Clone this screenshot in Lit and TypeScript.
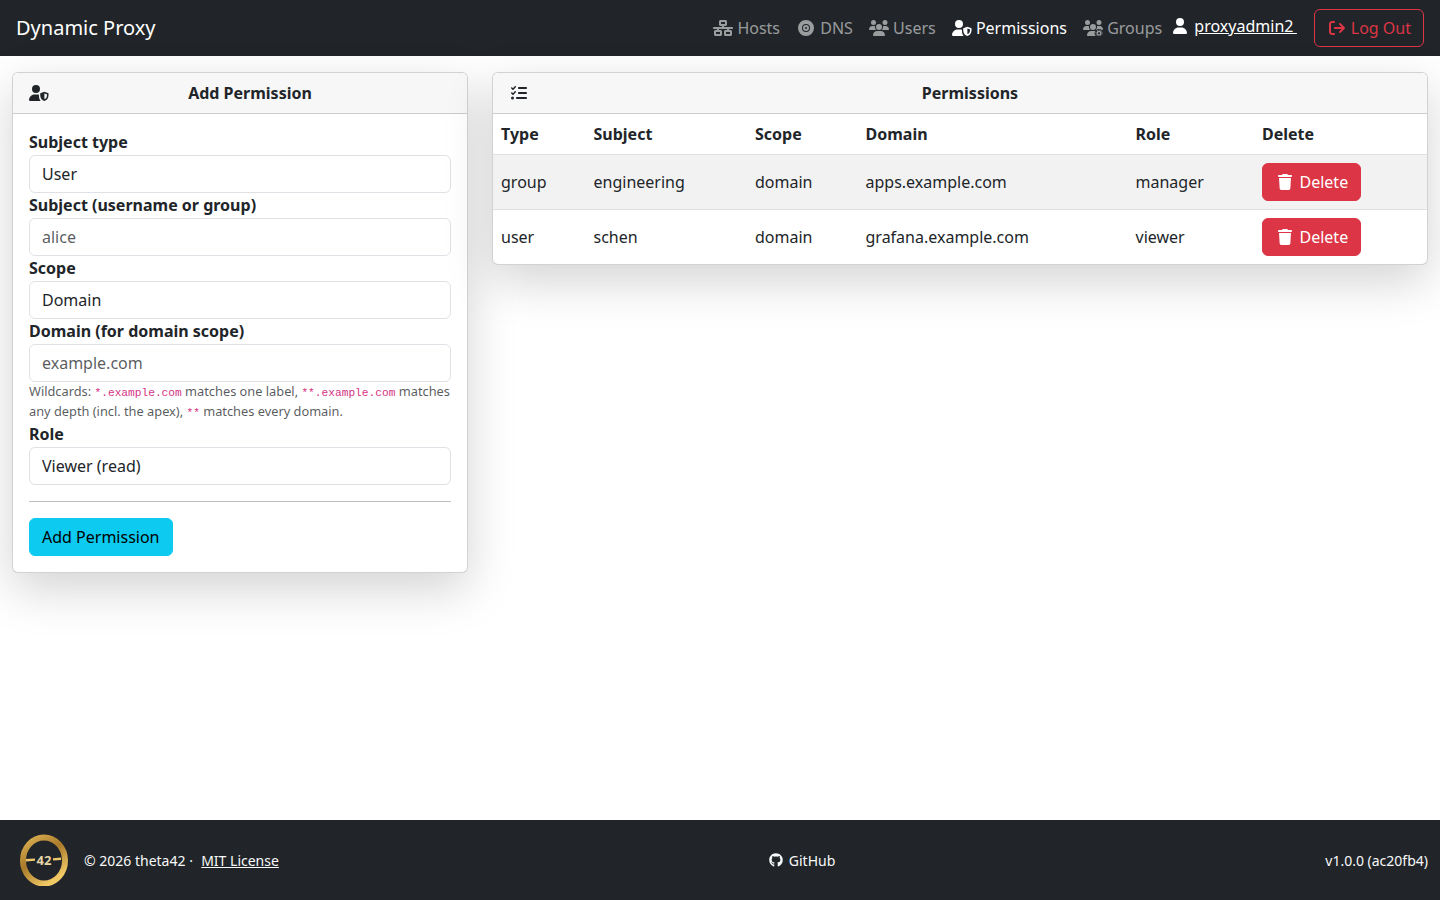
import { LitElement, html, css, svg } from 'lit';
import { customElement } from 'lit/decorators.js';

const icon = (box: string, d: string) => html`<svg class="ico" viewBox=${box} fill="currentColor"><path d=${d}></path></svg>`;

const USER = 'M224 256A128 128 0 1 0 224 0a128 128 0 1 0 0 256zm-45.7 48C79.8 304 0 383.8 0 482.3C0 498.7 13.3 512 29.7 512l388.6 0c16.4 0 29.7-13.3 29.7-29.7C448 383.8 368.2 304 269.7 304l-91.4 0z';
const USERS = 'M144 0a80 80 0 1 1 0 160A80 80 0 1 1 144 0zM512 0a80 80 0 1 1 0 160A80 80 0 1 1 512 0zM0 298.7C0 239.8 47.8 192 106.7 192l42.7 0c15.9 0 31 3.5 44.6 9.7c-1.3 7.2-1.9 14.7-1.9 22.3c0 38.2 16.8 72.5 43.3 96c-.2 0-.4 0-.7 0L21.3 320C9.6 320 0 310.4 0 298.7zM405.3 320c-.2 0-.4 0-.7 0c26.6-23.5 43.3-57.8 43.3-96c0-7.6-.7-15-1.9-22.3c13.6-6.3 28.7-9.7 44.6-9.7l42.7 0C592.2 192 640 239.8 640 298.7c0 11.8-9.6 21.3-21.3 21.3l-213.3 0zM224 224a96 96 0 1 1 192 0 96 96 0 1 1 -192 0zM128 485.3C128 411.7 187.7 352 261.3 352l117.3 0C452.3 352 512 411.7 512 485.3c0 14.7-11.9 26.7-26.7 26.7l-330.7 0c-14.7 0-26.7-11.9-26.7-26.7z';
const WIRED = 'M256 64H384v64H256V64zM240 0c-26.5 0-48 21.5-48 48v96c0 26.5 21.5 48 48 48h48v32H32c-17.7 0-32 14.3-32 32s14.3 32 32 32h96v32H80c-26.5 0-48 21.5-48 48v96c0 26.5 21.5 48 48 48H240c26.5 0 48-21.5 48-48V368c0-26.5-21.5-48-48-48H192V288H448v32H400c-26.5 0-48 21.5-48 48v96c0 26.5 21.5 48 48 48H560c26.5 0 48-21.5 48-48V368c0-26.5-21.5-48-48-48H512V288h96c17.7 0 32-14.3 32-32s-14.3-32-32-32H352V192h48c26.5 0 48-21.5 48-48V48c0-26.5-21.5-48-48-48H240zM96 448V384H224v64H96zm320-64H544v64H416V384z';
const DISC = 'M0 256a256 256 0 1 1 512 0A256 256 0 1 1 0 256zm256-96a96 96 0 1 1 0 192 96 96 0 1 1 0-192zm0 224a128 128 0 1 0 0-256 128 128 0 1 0 0 256zm0-96a32 32 0 1 0 0-64 32 32 0 1 0 0 64z';
const LOGOUT = 'M502.6 278.6c12.5-12.5 12.5-32.8 0-45.3l-128-128c-12.5-12.5-32.8-12.5-45.3 0s-12.5 32.8 0 45.3L402.7 224 192 224c-17.7 0-32 14.3-32 32s14.3 32 32 32l210.7 0-73.4 73.4c-12.5 12.5-12.5 32.8 0 45.3s32.8 12.5 45.3 0l128-128zM160 96c17.7 0 32-14.3 32-32s-14.3-32-32-32L96 32C43 32 0 75 0 128L0 384c0 53 43 96 96 96l64 0c17.7 0 32-14.3 32-32s-14.3-32-32-32l-64 0c-17.7 0-32-14.3-32-32l0-256c0-17.7 14.3-32 32-32l64 0z';
const TRASH = 'M135.2 17.7L128 32 32 32C14.3 32 0 46.3 0 64S14.3 96 32 96l384 0c17.7 0 32-14.3 32-32s-14.3-32-32-32l-96 0-7.2-14.3C307.4 6.8 296.3 0 284.2 0L163.8 0c-12.1 0-23.2 6.8-28.6 17.7zM416 128L32 128 53.2 467c1.6 25.3 22.6 45 47.9 45l245.8 0c25.3 0 46.3-19.7 47.9-45L416 128z';
const TASKS = 'M152.1 38.2c9.9 8.9 10.7 24 1.8 33.9l-72 80c-4.4 4.9-10.6 7.8-17.2 7.9s-12.9-2.4-17.6-7L7 113C-2.3 103.6-2.3 88.4 7 79s24.6-9.4 33.9 0l22.1 22.1 55.1-61.2c8.9-9.9 24-10.7 33.9-1.8zm0 160c9.9 8.9 10.7 24 1.8 33.9l-72 80c-4.4 4.9-10.6 7.8-17.2 7.9s-12.9-2.4-17.6-7L7 273c-9.4-9.4-9.4-24.6 0-33.9s24.6-9.4 33.9 0l22.1 22.1 55.1-61.2c8.9-9.9 24-10.7 33.9-1.8zM224 96c0-17.7 14.3-32 32-32H480c17.7 0 32 14.3 32 32s-14.3 32-32 32H256c-17.7 0-32-14.3-32-32zm0 160c0-17.7 14.3-32 32-32H480c17.7 0 32 14.3 32 32s-14.3 32-32 32H256c-17.7 0-32-14.3-32-32zM160 416c0-17.7 14.3-32 32-32H480c17.7 0 32 14.3 32 32s-14.3 32-32 32H192c-17.7 0-32-14.3-32-32zM48 368a48 48 0 1 1 0 96 48 48 0 1 1 0-96z';
const GITHUB = 'M244.8 8C106.1 8 0 113.3 0 252c0 110.9 69.8 205.8 169.5 239.2 12.8 2.3 17.3-5.6 17.3-12.1 0-6.2-.3-40.4-.3-61.4 0 0-70 15-84.7-29.8 0 0-11.4-29.1-27.8-36.6 0 0-22.9-15.7 1.6-15.4 0 0 24.9 2 38.6 25.8 21.9 38.6 58.6 27.5 72.9 20.9 2.3-16 8.8-27.1 16-33.7-55.9-6.2-112.3-14.3-112.3-110.5 0-27.5 7.6-41.3 23.6-58.9-2.6-6.5-11.1-33.3 2.6-67.9 20.9-6.5 69 27 69 27 20-5.6 41.5-8.5 62.8-8.5s42.8 2.9 62.8 8.5c0 0 48.1-33.6 69-27 13.7 34.7 5.2 61.4 2.6 67.9 16 17.7 25.8 31.5 25.8 58.9 0 96.5-58.9 104.2-114.8 110.5 9.2 7.9 17 22.9 17 46.4 0 33.7-.3 75.4-.3 83.6 0 6.5 4.6 14.4 17.3 12.1C428.2 457.8 496 362.9 496 252 496 113.3 383.5 8 244.8 8z';

// person with a half filled shield at the lower right
const userShield = () => html`<svg class="ico" viewBox="0 0 640 512" fill="currentColor">
  <path d="M224 256A128 128 0 1 0 224 0a128 128 0 1 0 0 256zM178.3 304C79.8 304 0 383.8 0 482.3 0 498.7 13.3 512 29.7 512H375C340 470 318 415 318 345V312C302 306 285 304 269.7 304z"></path>
  <path fill-rule="evenodd" d="M492 216L624 262V340C624 425 560 490 492 512 424 490 360 425 360 340V262zM492 272V450C535 434 574 395 574 340V296z"></path>
</svg>`;

// group of people with a gear at the lower right
const usersGear = () => html`<svg class="ico" viewBox="0 0 640 512" fill="currentColor">
  <mask id="gear-cut"><rect width="640" height="512" fill="#fff"></rect><circle cx="512" cy="425" r="140" fill="#000"></circle></mask>
  <path mask="url(#gear-cut)" d=${USERS}></path>
  <circle cx="512" cy="425" r="58" fill="none" stroke="currentColor" stroke-width="42"></circle>
  <circle cx="512" cy="425" r="100" fill="none" stroke="currentColor" stroke-width="28" stroke-dasharray="39 39.5"></circle>
</svg>`;

const logo = svg`<svg class="logo" viewBox="0 0 48 52">
  <defs>
    <linearGradient id="gold" x1="0" y1="0" x2="0.6" y2="1">
      <stop offset="0" stop-color="#e0b455"></stop>
      <stop offset="0.5" stop-color="#a87a2a"></stop>
      <stop offset="1" stop-color="#f0c965"></stop>
    </linearGradient>
  </defs>
  <ellipse cx="24" cy="26.5" rx="21" ry="23" fill="none" stroke="url(#gold)" stroke-width="6"></ellipse>
  <path d="M6 26.2L15 25.6M33 25.4L41 24.8" stroke="#efc86e" stroke-width="2.4" fill="none"></path>
  <text x="24" y="30.5" text-anchor="middle" font-family="Noto Sans, sans-serif" font-size="13" font-weight="700" fill="#e6d5a8">42</text>
</svg>`;

const NAV = [
  { label: 'Hosts', glyph: icon('0 0 640 512', WIRED) },
  { label: 'DNS', glyph: icon('0 0 512 512', DISC) },
  { label: 'Users', glyph: icon('0 0 640 512', USERS) },
  { label: 'Permissions', glyph: userShield(), active: true },
  { label: 'Groups', glyph: usersGear() },
];

const ROWS = [
  ['group', 'engineering', 'domain', 'apps.example.com', 'manager'],
  ['user', 'schen', 'domain', 'grafana.example.com', 'viewer'],
];

@customElement('app-root')
export class AppRoot extends LitElement {
  static styles = css`
    :host {
      display: flex;
      flex-direction: column;
      min-height: 100vh;
      font-family: 'Noto Sans', sans-serif;
      font-size: 16px;
      line-height: 1.5;
      color: #212529;
      background: #fff;
    }
    * { box-sizing: border-box; }
    .ico { width: 20px; height: 16px; flex: none; display: block; }

    nav {
      height: 56px;
      flex: none;
      background: #212529;
      display: flex;
      align-items: center;
      padding: 0 16px;
    }
    .brand { font-size: 20px; color: #fff; margin-right: auto; }
    .nav-item {
      display: flex;
      align-items: center;
      gap: 4.2px;
      padding: 0 8px;
      color: rgba(255, 255, 255, .55);
    }
    .nav-item.active { color: #fff; }
    .me {
      display: flex;
      align-items: center;
      gap: 4.2px;
      margin-right: 16.7px;
      color: #fff;
      position: relative;
      top: -2px;
    }
    .me a { color: #fff; text-decoration: underline; white-space: pre; word-spacing: -0.7px; }
    .logout {
      display: flex;
      align-items: center;
      gap: 4.2px;
      height: 38px;
      padding: 0 12px;
      border: 1px solid #dc3545;
      border-radius: 6px;
      color: #dc3545;
    }

    main {
      flex: 1;
      display: flex;
      align-items: flex-start;
      gap: 24px;
      padding: 16px 12px;
    }
    .card {
      background: #fff;
      border: 1px solid rgba(0, 0, 0, .175);
      border-radius: 6px;
      box-shadow: 0 16px 48px rgba(0, 0, 0, .175);
      overflow: hidden;
    }
    .side { width: 456px; flex: none; }
    .list { flex: 1; }
    .card-head {
      height: 41px;
      display: flex;
      align-items: center;
      padding: 0 16px;
      background: #f7f7f7;
      border-bottom: 1px solid rgba(0, 0, 0, .175);
    }
    .card-head h2 {
      flex: 1;
      margin: 0;
      text-align: center;
      font-size: 16px;
      font-weight: 700;
    }

    .card-body { padding: 16px; }
    label { display: block; height: 25px; font-weight: 700; }
    .control {
      display: block;
      width: 100%;
      height: 38px;
      padding: 0 12px;
      border: 1px solid #dee2e6;
      border-radius: 6px;
      background: #fff;
      font: inherit;
      color: #212529;
      appearance: none;
    }
    .control::placeholder { color: rgba(33, 37, 41, .75); opacity: 1; }
    .help {
      margin: -1px 0 1px;
      font-size: 12.8px;
      line-height: 20px;
      color: rgba(33, 37, 41, .75);
    }
    code {
      font-family: 'Liberation Mono', monospace;
      font-size: 11.2px;
      line-height: 1;
      color: #d63384;
    }
    hr {
      margin: 16px 0;
      border: 0;
      border-top: 1px solid rgba(0, 0, 0, .25);
    }
    .add {
      height: 38px;
      padding: 0 12px;
      border: 1px solid #0dcaf0;
      border-radius: 6px;
      background: #0dcaf0;
      font: inherit;
      color: #000;
    }

    table { width: 100%; border-collapse: collapse; table-layout: fixed; }
    th, td {
      padding: 8px;
      text-align: left;
      border-bottom: 1px solid #dee2e6;
    }
    th { font-weight: 700; height: 40px; }
    td { height: 55px; }
    tbody tr:last-child td { border-bottom: 0; height: 54px; }
    tbody tr:nth-child(odd) td { background: #f2f2f2; }
    .c-type { width: 92.5px; }
    .c-subject { width: 161.5px; }
    .c-scope { width: 110.5px; }
    .c-domain { width: 270px; }
    .c-role { width: 126.5px; }
    .del {
      display: inline-flex;
      align-items: center;
      gap: 4.5px;
      height: 38px;
      padding: 0 12px;
      border: 1px solid #dc3545;
      border-radius: 6px;
      background: #dc3545;
      font: inherit;
      color: #fff;
      vertical-align: middle;
    }

    footer {
      height: 80px;
      flex: none;
      background: #212529;
      color: #f8f9fa;
      font-size: 14px;
      display: flex;
      align-items: center;
      justify-content: space-between;
      padding: 0 12px;
    }
    .foot-left { display: flex; align-items: center; white-space: pre; }
    .foot-left a { margin-left: 1px; }
    .logo { width: 48px; height: 52px; margin: 0 16px 0 8px; display: block; }
    footer a { color: #f8f9fa; }
    .gh { display: flex; align-items: center; gap: 6px; text-decoration: none; }
    .gh .ico { width: 14px; height: 14px; }
  `;

  render() {
    return html`
      <nav>
        <div class="brand">Dynamic Proxy</div>
        ${NAV.map(n => html`
          <div class="nav-item ${n.active ? 'active' : ''}">${n.glyph}<span>${n.label}</span></div>
        `)}
        <div class="me">${icon('0 0 448 512', USER)}<a>proxyadmin2 </a></div>
        <div class="logout">${icon('0 0 512 512', LOGOUT)}<span>Log Out</span></div>
      </nav>
      <main>
        <section class="card side">
          <div class="card-head">${userShield()}<h2>Add Permission</h2></div>
          <div class="card-body">
            <label>Subject type</label>
            <select class="control"><option>User</option><option>Group</option></select>
            <label>Subject (username or group)</label>
            <input class="control" placeholder="alice" />
            <label>Scope</label>
            <select class="control"><option>Domain</option><option>Global</option></select>
            <label>Domain (for domain scope)</label>
            <input class="control" placeholder="example.com" />
            <div class="help">Wildcards: <code>*.example.com</code> matches one label, <code>**.example.com</code> matches any depth (incl. the apex), <code>**</code> matches every domain.</div>
            <label>Role</label>
            <select class="control"><option>Viewer (read)</option><option>Manager</option></select>
            <hr />
            <button class="add">Add Permission</button>
          </div>
        </section>
        <section class="card list">
          <div class="card-head">${icon('0 0 512 512', TASKS)}<h2>Permissions</h2></div>
          <table>
            <thead>
              <tr>
                <th class="c-type">Type</th>
                <th class="c-subject">Subject</th>
                <th class="c-scope">Scope</th>
                <th class="c-domain">Domain</th>
                <th class="c-role">Role</th>
                <th>Delete</th>
              </tr>
            </thead>
            <tbody>
              ${ROWS.map(r => html`
                <tr>
                  ${r.map(c => html`<td>${c}</td>`)}
                  <td><button class="del">${icon('0 0 448 512', TRASH)}<span>Delete</span></button></td>
                </tr>
              `)}
            </tbody>
          </table>
        </section>
      </main>
      <footer>
        <div class="foot-left">${logo}<span>© 2026 theta42 ·  </span><a href="#">MIT License</a></div>
        <a class="gh" href="#">${icon('0 0 496 512', GITHUB)}<span>GitHub</span></a>
        <div>v1.0.0 (ac20fb4)</div>
      </footer>
    `;
  }
}
